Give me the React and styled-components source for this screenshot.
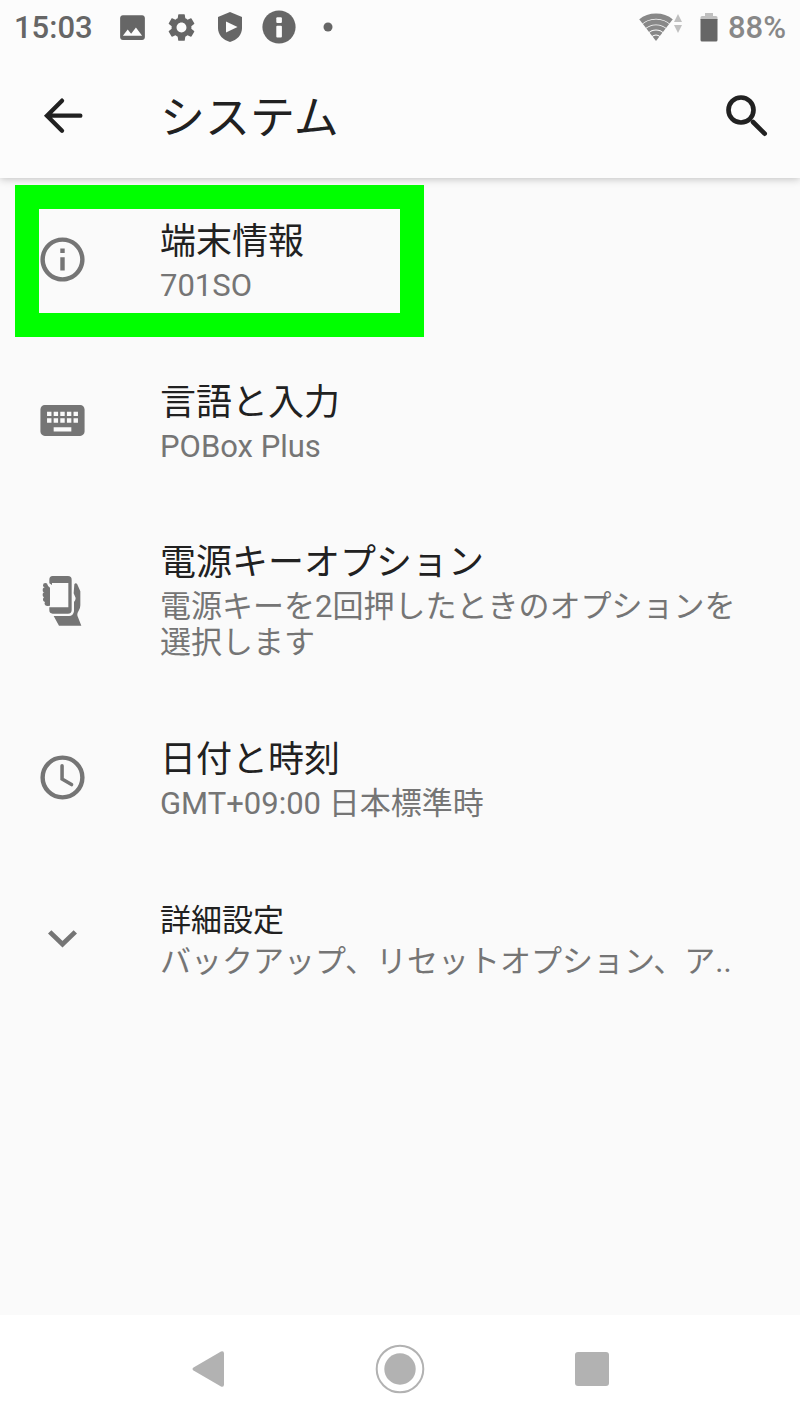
import styled, { createGlobalStyle } from 'styled-components';
import { MdImage, MdInfoOutline, MdKeyboard, MdSettings } from 'react-icons/md';

const GlobalStyle = createGlobalStyle`
  * {
    box-sizing: border-box;
  }

  body {
    margin: 0;
    background: #fafafa;
    font-family: Roboto, 'Noto Sans CJK JP', sans-serif;
  }
`;

const Screen = styled.div`
  display: flex;
  flex-direction: column;
  min-height: 100vh;
`;

const Top = styled.div`
  position: relative;
  background: #fcfcfc;
  box-shadow: 0 1px 8px rgba(0, 0, 0, 0.24);
`;

const StatusBar = styled.div`
  display: flex;
  align-items: center;
  height: 54px;
  padding: 0 14px;
  color: #666;
  font-size: 31px;
  font-weight: 500;
`;

const StatusIcons = styled.div`
  display: flex;
  flex: 1;
  margin-left: 15px;
`;

const StatusIcon = styled.span`
  display: flex;
  align-items: center;
  justify-content: center;
  width: 49px;
`;

const Signal = styled.div`
  display: flex;
  color: #888;
`;

const Battery = styled.div`
  display: flex;
  align-items: center;
  gap: 10px;
  margin-left: 18px;
  color: #888;
`;

const AppBar = styled.header`
  display: flex;
  align-items: center;
  height: 124px;
  padding: 0 27px 2px 36px;
`;

const IconButton = styled.button`
  display: flex;
  padding: 0;
  border: 0;
  background: none;
  color: #212121;
  cursor: pointer;
`;

const Title = styled.h1`
  flex: 1;
  margin: 0 0 0 71px;
  padding-top: 8px;
  color: #212121;
  font-size: 45px;
  font-weight: 400;
  line-height: 52px;
`;

const List = styled.ul`
  flex: 1;
  margin: 0;
  padding: 1px 0 0;
  list-style: none;
`;

const Item = styled.li`
  position: relative;
`;

const Row = styled.a`
  display: flex;
  align-items: center;
  min-height: 161px;
  padding: 36px;
  color: #757575;
  text-decoration: none;
`;

const RowIcon = styled.span`
  display: flex;
  flex: none;
  width: 124px;
`;

const RowText = styled.span`
  display: flex;
  flex-direction: column;
  min-width: 0;
`;

const RowTitle = styled.span`
  color: #212121;
  font-size: ${({ $small }) => ($small ? '31px' : '36px')};
  line-height: ${({ $small }) => ($small ? '46px' : '52px')};
`;

const Summary = styled.span`
  font-size: 31px;
  line-height: 36px;
`;

const Highlight = styled.div`
  position: absolute;
  top: 6px;
  bottom: 3px;
  left: 15px;
  width: 409px;
  border: 24px solid #00ff00;
  pointer-events: none;
`;

const NavBar = styled.nav`
  display: flex;
  justify-content: center;
  height: 107px;
  background: #fff;
`;

const NavButton = styled.button`
  display: flex;
  align-items: center;
  justify-content: center;
  width: 24%;
  padding: 0;
  border: 0;
  background: none;
  color: #b2b2b2;
  cursor: pointer;
`;

const ShieldIcon = () => (
  <svg width="26" height="32" viewBox="0 0 26 32" fill="currentColor">
    <path d="M13 1 25 6v11c0 7-5 12-12 14C6 29 1 24 1 17V6z" />
    <path d="M9 10.5v11L20.5 16z" fill="#fcfcfc" />
  </svg>
);

const InfoIcon = () => (
  <svg width="34" height="34" viewBox="0 0 34 34">
    <circle cx="17" cy="17" r="16.6" fill="currentColor" />
    <rect x="14.3" y="7.3" width="5.6" height="5.6" rx="1" fill="#fcfcfc" />
    <rect x="14.3" y="15.8" width="5.6" height="11.7" rx="1" fill="#fcfcfc" />
  </svg>
);

const DotIcon = () => (
  <svg width="10" height="10" viewBox="0 0 10 10" fill="currentColor">
    <circle cx="5" cy="5" r="4.5" />
  </svg>
);

const WifiIcon = () => (
  <svg width="43" height="30" viewBox="0 0 43 30">
    <defs>
      <clipPath id="fan">
        <path d="M17 29 0 7V0h34v7z" />
      </clipPath>
    </defs>
    <g clipPath="url(#fan)" fill="none" stroke="currentColor">
      <circle cx="17" cy="29" r="24.8" strokeWidth="5.2" />
      <circle cx="17" cy="29" r="19" strokeWidth="4.8" />
      <circle cx="17" cy="29" r="13.6" strokeWidth="4.4" />
      <circle cx="17" cy="29" r="8.5" strokeWidth="4.2" />
      <circle cx="17" cy="29" r="2.8" strokeWidth="5.6" />
    </g>
    <path d="M39 2l4 8h-8zM39 21l4-8h-8z" fill="#c0c0c0" />
  </svg>
);

const BatteryIcon = () => (
  <svg width="18" height="30" viewBox="0 0 18 30">
    <path d="M5 1h8v3h3q1.5 0 1.5 1.5V8H.5V5.5Q.5 4 2 4h3z" fill="#c0c0c0" />
    <path d="M.5 7h17v21q0 1.5-1.5 1.5H2Q.5 29.5.5 28z" fill="#666" />
  </svg>
);

const BackIcon = () => (
  <svg width="53" height="53" viewBox="108 267 159 159" fill="none" stroke="currentColor">
    <path d="M241 347H143M186 302l-45 45 45 45" strokeWidth="13" strokeLinecap="round" />
  </svg>
);

const SearchIcon = () => (
  <svg width="53" height="53" viewBox="360 267 159 159" fill="none" stroke="currentColor">
    <circle cx="423" cy="330" r="37.5" strokeWidth="14" />
    <path d="M459 366l35 35" strokeWidth="14" strokeLinecap="round" />
  </svg>
);

const HandPhoneIcon = () => (
  <svg width="53" height="53" viewBox="0 10 159 159" fill="currentColor">
    <path d="M50 19h46q11 0 11 11v91q0 11-11 11H50q-10 0-10-10v-9h57V40H48v6l-8-5V30q0-11 10-11z" />
    <path d="M27 41l15 13v54h-8L24 92z" />
    <circle cx="28" cy="47" r="7" />
    <circle cx="28" cy="61" r="8" />
    <circle cx="28" cy="75" r="8" />
    <circle cx="29" cy="89" r="8" />
    <circle cx="34" cy="101" r="8" />
    <path d="M115 44q3-6 8-2l10 23v42q0 10-5 16-7 10-2 20l10 25H69l-16-29h46q13 0 15-14V97q5-5 5-12l-6-14z" />
  </svg>
);

const ClockIcon = () => (
  <svg width="53" height="53" viewBox="0 0 24 24" fill="none" stroke="currentColor">
    <circle cx="12" cy="12" r="9" strokeWidth="2" />
    <path d="M11.8 6.7v6l4.3 2.5" strokeWidth="1.6" strokeLinecap="round" />
  </svg>
);

const ChevronIcon = () => (
  <svg width="53" height="53" viewBox="0 0 24 24" fill="none" stroke="currentColor">
    <path d="M6.2 9l5.8 5.6L17.8 9" strokeWidth="2.2" />
  </svg>
);

const items = [
  {
    title: '端末情報',
    summary: '701SO',
    icon: <MdInfoOutline size={53} />,
    highlighted: true,
  },
  {
    title: '言語と入力',
    summary: 'POBox Plus',
    icon: <MdKeyboard size={53} />,
  },
  {
    title: '電源キーオプション',
    summary: '電源キーを2回押したときのオプションを選択します',
    icon: <HandPhoneIcon />,
  },
  {
    title: '日付と時刻',
    summary: 'GMT+09:00 日本標準時',
    icon: <ClockIcon />,
  },
  {
    title: '詳細設定',
    summary: 'バックアップ、リセットオプション、ア..',
    icon: <ChevronIcon />,
    small: true,
  },
];

const App = () => {
  return (
    <Screen lang="ja">
      <GlobalStyle />
      <Top>
        <StatusBar>
          <span>15:03</span>
          <StatusIcons>
            <StatusIcon>
              <MdImage size={33} />
            </StatusIcon>
            <StatusIcon>
              <MdSettings size={33} />
            </StatusIcon>
            <StatusIcon>
              <ShieldIcon />
            </StatusIcon>
            <StatusIcon>
              <InfoIcon />
            </StatusIcon>
            <StatusIcon>
              <DotIcon />
            </StatusIcon>
          </StatusIcons>
          <Signal>
            <WifiIcon />
          </Signal>
          <Battery>
            <BatteryIcon />
            <span>88%</span>
          </Battery>
        </StatusBar>
        <AppBar>
          <IconButton aria-label="戻る">
            <BackIcon />
          </IconButton>
          <Title>システム</Title>
          <IconButton aria-label="検索">
            <SearchIcon />
          </IconButton>
        </AppBar>
      </Top>
      <List>
        {items.map((item) => (
          <Item key={item.title}>
            <Row href="#">
              <RowIcon>{item.icon}</RowIcon>
              <RowText>
                <RowTitle $small={item.small}>{item.title}</RowTitle>
                <Summary>{item.summary}</Summary>
              </RowText>
            </Row>
            {item.highlighted && <Highlight />}
          </Item>
        ))}
      </List>
      <NavBar>
        <NavButton aria-label="戻る">
          <svg width="33" height="36" viewBox="0 0 33 36" fill="currentColor">
            <path d="M1.5 16.5 29 .5q3-1 3 2v31q0 3-3 2L1.5 19.5q-2-1.5 0-3z" />
          </svg>
        </NavButton>
        <NavButton aria-label="ホーム">
          <svg width="50" height="50" viewBox="0 0 50 50" fill="currentColor">
            <circle cx="25" cy="25" r="15.7" />
            <circle cx="25" cy="25" r="23.3" fill="none" stroke="currentColor" strokeWidth="2" />
          </svg>
        </NavButton>
        <NavButton aria-label="最近のアプリ">
          <svg width="34" height="34" viewBox="0 0 34 34" fill="currentColor">
            <rect width="34" height="34" rx="3" />
          </svg>
        </NavButton>
      </NavBar>
    </Screen>
  );
};

export default App;
